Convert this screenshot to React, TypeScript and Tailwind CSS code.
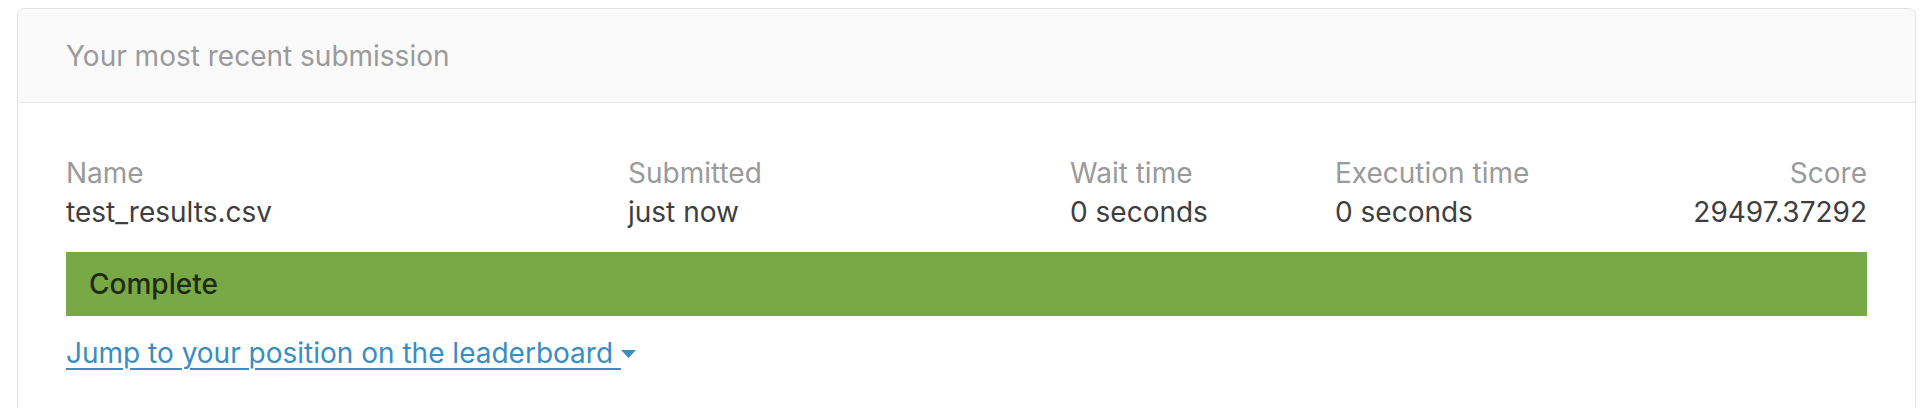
import React from "react"

const columns = [
  { label: "Name", value: "test_results.csv", width: "w-[562px]" },
  { label: "Submitted", value: "just now", width: "w-[442px]" },
  { label: "Wait time", value: "0 seconds", width: "w-[265px]" },
  { label: "Execution time", value: "0 seconds", width: "flex-1" },
]

export default function App() {
  return (
    <div className="min-h-[408px] bg-white pt-[8px] pl-[17px] pr-[6px] font-['Inter',sans-serif]">
      <div className="min-h-[420px] rounded-t-[7px] border border-[#e3e3e3] bg-white">
        <div className="flex h-[94px] items-center rounded-t-[7px] border-b border-[#e8e8e8] bg-[#fafafa] px-12">
          <h2 className="text-[28px] leading-[40px] text-[#9a9a9a]">Your most recent submission</h2>
        </div>

        <div className="px-12 pt-[51px]">
          <div className="flex text-[28px] leading-[39px]">
            {columns.map((col) => (
              <div key={col.label} className={col.width}>
                <div className="text-[#9a9a9a]">{col.label}</div>
                <div className="text-[#3e3e3e]">{col.value}</div>
              </div>
            ))}
            <div className="text-right">
              <div className="text-[#9a9a9a]">Score</div>
              <div className="text-[#3e3e3e]">29497.37292</div>
            </div>
          </div>

          <div className="mt-[20px] flex h-[64px] items-center bg-[#79a947] pl-[23px]">
            <span className="text-[28px] font-medium text-[#1d2b12]">Complete</span>
          </div>

          <a href="#" className="mt-[18px] inline-flex items-center text-[28px] leading-[38px] text-[#3a8dc0]">
            <span className="underline underline-offset-[5px] decoration-[2px]">Jump to your position on the leaderboard&nbsp;</span>
            <svg className="mt-[2px]" width="15" height="8" viewBox="0 0 15 8">
              <path d="M0 0 L15 0 L7.5 8 Z" fill="#3a8dc0" />
            </svg>
          </a>
        </div>
      </div>
    </div>
  )
}
